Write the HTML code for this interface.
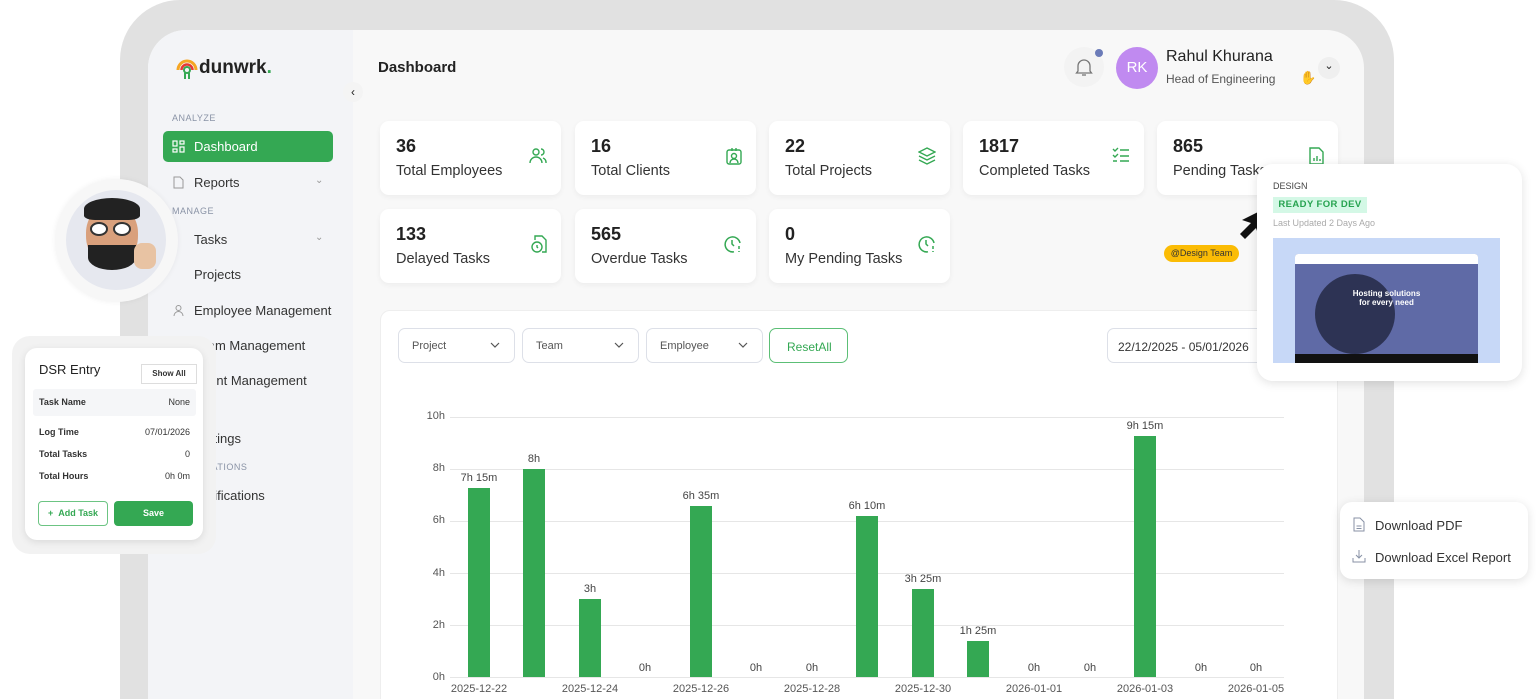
<!DOCTYPE html>
<html style="width:1536px;height:699px;overflow:hidden"><head><meta charset="utf-8"><style>
*{box-sizing:border-box;margin:0;padding:0}
body{width:1536px;height:699px;overflow:hidden;background:#fff;font-family:"Liberation Sans",sans-serif;color:#222;position:relative}
.abs{position:absolute}
.frame{left:120px;top:0;width:1274px;height:699px;background:#e1e1e1;border-radius:60px 60px 0 0}
.screen{left:148px;top:30px;width:1216px;height:669px;background:#f8f8f8;border-radius:38px 38px 0 0;overflow:hidden}
.side{left:148px;top:30px;width:205px;height:669px;background:#f3f4f7;border-radius:38px 0 0 0}
.card{background:#fff;border-radius:9px;box-shadow:0 2px 6px rgba(0,0,0,.05)}
.num{position:absolute;left:16px;top:15px;font-size:18px;font-weight:bold;color:#222}
.lab{position:absolute;left:16px;top:42px;font-size:14.5px;color:#333}
.ic{position:absolute;right:14px;top:26px}
.nav{position:absolute;left:194px;font-size:13px;color:#333}
.sec{position:absolute;left:172px;font-size:9px;color:#8a93a6;letter-spacing:.5px}
.sel{position:absolute;top:328px;height:35px;border:1px solid #dde0e8;border-radius:7px;background:#fff;font-size:11px;color:#555;padding:11px 0 0 13px}
.sel svg{position:absolute;right:14px;top:13px}
.yl{position:absolute;left:405px;width:40px;text-align:right;font-size:11px;color:#555}
.gl{position:absolute;left:450px;width:834px;height:1px;background:#e6e6e6}
.bar{position:absolute;width:22px;background:#34a853}
.bl{position:absolute;width:80px;text-align:center;font-size:11px;color:#444}
.xl{position:absolute;top:683px;width:80px;text-align:center;font-size:11px;color:#555}
</style></head><body>
<div class="abs frame"></div>
<div class="abs screen"></div>
<div class="abs side"></div>
<svg class="abs" style="left:175px;top:57px" width="24" height="24" viewBox="0 0 24 24"><path d="M3 13a9 9 0 0 1 18 0" stroke="#f5a623" stroke-width="3" fill="none"/><path d="M6.5 13a5.5 5.5 0 0 1 11 0" stroke="#e53935" stroke-width="2.5" fill="none"/><circle cx="12" cy="13" r="3" fill="none" stroke="#34a853" stroke-width="2"/><path d="M10 16v6M14 16v6" stroke="#34a853" stroke-width="2"/></svg>
<div class="abs" style="left:199px;top:57px;font-size:19px;font-weight:bold;color:#222">dunwrk<span style="color:#34a853">.</span></div>
<div class="abs" style="left:343px;top:82px;width:20px;height:20px;border-radius:50%;background:#f4f4f4;font-size:12px;text-align:center;line-height:20px;color:#222">&#8249;</div>
<div class="sec" style="top:113px">ANALYZE</div>
<div class="abs" style="left:163px;top:131px;width:170px;height:31px;background:#34a853;border-radius:5px"></div>
<svg class="abs" style="left:172px;top:140px" width="13" height="13" viewBox="0 0 13 13" fill="none" stroke="#fff" stroke-width="1.2"><rect x="1" y="1" width="4" height="5"/><rect x="8" y="1" width="4" height="3"/><rect x="1" y="9" width="4" height="3"/><rect x="8" y="7" width="4" height="5"/></svg>
<div class="nav" style="top:139px;color:#fff">Dashboard</div>
<svg class="abs" style="left:173px;top:176px" width="11" height="13" viewBox="0 0 11 13" fill="none" stroke="#999"><path d="M1 1h6l3 3v8H1z"/></svg>
<div class="nav" style="top:175px">Reports</div>
<div class="abs" style="left:315px;top:175px;font-size:10px;color:#999">&#8964;</div>
<div class="sec" style="top:206px">MANAGE</div>
<div class="nav" style="top:232px">Tasks</div>
<div class="abs" style="left:315px;top:232px;font-size:10px;color:#999">&#8964;</div>
<div class="nav" style="top:267px">Projects</div>
<div class="nav" style="top:303px">Employee Management</div>
<svg class="abs" style="left:173px;top:304px" width="11" height="13" viewBox="0 0 11 13" fill="none" stroke="#999"><circle cx="5.5" cy="4" r="2.5"/><path d="M1 12a4.5 4.5 0 0 1 9 0"/></svg>
<div class="nav" style="top:338px">Team Management</div>
<div class="nav" style="top:373px">Client Management</div>
<div class="nav" style="top:431px">Settings</div>
<div class="sec" style="top:462px">NOTIFICATIONS</div>
<div class="nav" style="top:488px">Notifications</div>
<div class="abs" style="left:378px;top:59px;font-size:15px;font-weight:bold">Dashboard</div>
<div class="abs" style="left:1064px;top:47px;width:40px;height:40px;border-radius:50%;background:#f3f3f3"></div>
<svg class="abs" style="left:1075px;top:57px" width="18" height="20" viewBox="0 0 18 20" fill="none" stroke="#777" stroke-width="1.3"><path d="M3 14V9a6 6 0 0 1 12 0v5l1.5 2h-15z"/><path d="M7 18h4"/></svg>
<div class="abs" style="left:1095px;top:49px;width:8px;height:8px;border-radius:50%;background:#6b7bb8"></div>
<div class="abs" style="left:1116px;top:47px;width:42px;height:42px;border-radius:50%;background:#c08af0;color:#fff;font-size:15px;text-align:center;line-height:42px">RK</div>
<div class="abs" style="left:1166px;top:48px;font-size:16px;color:#222">Rahul Khurana</div>
<div class="abs" style="left:1166px;top:72px;font-size:12px;color:#555">Head of Engineering</div>
<div class="abs" style="left:1300px;top:70px;font-size:13px;color:#ddd">&#9995;</div>
<div class="abs" style="left:1318px;top:57px;width:22px;height:22px;border-radius:50%;background:#efefef;text-align:center;font-size:11px;line-height:18px">&#8964;</div>
<div class="abs card" style="left:380px;top:121px;width:181px;height:74px"><div class="num">36</div><div class="lab">Total Employees</div><svg class="ic" width="18" height="18" viewBox="0 0 18 18" fill="none" stroke="#34a853" stroke-width="1.4"><circle cx="7" cy="5" r="3"/><path d="M1 16a6 6 0 0 1 12 0M12 2a3 3 0 0 1 0 6M14 11a5 5 0 0 1 3 5"/></svg></div>
<div class="abs card" style="left:575px;top:121px;width:181px;height:74px"><div class="num">16</div><div class="lab">Total Clients</div><svg class="ic" width="16" height="18" viewBox="0 0 16 18" fill="none" stroke="#34a853" stroke-width="1.4"><rect x="1" y="3" width="14" height="14" rx="2"/><circle cx="8" cy="9" r="2.5"/><path d="M4 16a4 4 0 0 1 8 0M6 1v3M10 1v3"/></svg></div>
<div class="abs card" style="left:769px;top:121px;width:181px;height:74px"><div class="num">22</div><div class="lab">Total Projects</div><svg class="ic" width="18" height="18" viewBox="0 0 18 18" fill="none" stroke="#34a853" stroke-width="1.4"><path d="M9 1l8 4-8 4-8-4z"/><path d="M1 9l8 4 8-4M1 13l8 4 8-4"/></svg></div>
<div class="abs card" style="left:963px;top:121px;width:181px;height:74px"><div class="num">1817</div><div class="lab">Completed Tasks</div><svg class="ic" width="18" height="16" viewBox="0 0 18 16" fill="none" stroke="#34a853" stroke-width="1.4"><path d="M1 2l2 2 3-3M1 8l2 2 3-3M1 14h4M8 3h9M8 9h9M8 14h9"/></svg></div>
<div class="abs card" style="left:1157px;top:121px;width:181px;height:74px"><div class="num">865</div><div class="lab">Pending Tasks</div><svg class="ic" width="15" height="18" viewBox="0 0 15 18" fill="none" stroke="#34a853" stroke-width="1.4"><path d="M1 1h9l4 4v12H1z"/><path d="M5 14v-3M8 14v-5M11 14v-2"/></svg></div>
<div class="abs card" style="left:380px;top:209px;width:181px;height:74px"><div class="num">133</div><div class="lab">Delayed Tasks</div><svg class="ic" width="16" height="18" viewBox="0 0 16 18" fill="none" stroke="#34a853" stroke-width="1.4"><path d="M4 5V1h7l4 4v12h-4"/><circle cx="6" cy="12" r="5"/><path d="M6 10v2l1 1"/></svg></div>
<div class="abs card" style="left:575px;top:209px;width:181px;height:74px"><div class="num">565</div><div class="lab">Overdue Tasks</div><svg class="ic" width="18" height="18" viewBox="0 0 18 18" fill="none" stroke="#34a853" stroke-width="1.5"><path d="M16 8a7.5 7.5 0 1 0-6 8.8"/><path d="M8 5v4l2 2M15 11v3M15 16v1"/></svg></div>
<div class="abs card" style="left:769px;top:209px;width:181px;height:74px"><div class="num">0</div><div class="lab">My Pending Tasks</div><svg class="ic" width="18" height="18" viewBox="0 0 18 18" fill="none" stroke="#34a853" stroke-width="1.5"><path d="M16 8a7.5 7.5 0 1 0-6 8.8"/><path d="M8 5v4l2 2M15 11v3M15 16v1"/></svg></div>
<div class="abs" style="left:380px;top:310px;width:958px;height:400px;background:#fff;border:1px solid #eee;border-radius:10px"></div>
<div class="sel" style="left:398px;width:117px">Project<svg width="10" height="6" viewBox="0 0 10 6" fill="none" stroke="#555" stroke-width="1.2"><path d="M1 1l4 4 4-4"/></svg></div>
<div class="sel" style="left:522px;width:117px">Team<svg width="10" height="6" viewBox="0 0 10 6" fill="none" stroke="#555" stroke-width="1.2"><path d="M1 1l4 4 4-4"/></svg></div>
<div class="sel" style="left:646px;width:117px">Employee<svg width="10" height="6" viewBox="0 0 10 6" fill="none" stroke="#555" stroke-width="1.2"><path d="M1 1l4 4 4-4"/></svg></div>
<div class="sel" style="left:769px;width:79px;border-color:#5cbf76;color:#34a853;font-size:12px;padding-left:17px">ResetAll</div>
<div class="sel" style="left:1107px;width:160px;font-size:12px;color:#333;padding-left:10px">22/12/2025 - 05/01/2026</div>
<div class="yl" style="top:410px">10h</div><div class="gl" style="top:417px"></div>
<div class="yl" style="top:462px">8h</div><div class="gl" style="top:469px"></div>
<div class="yl" style="top:514px">6h</div><div class="gl" style="top:521px"></div>
<div class="yl" style="top:567px">4h</div><div class="gl" style="top:573px"></div>
<div class="yl" style="top:619px">2h</div><div class="gl" style="top:625px"></div>
<div class="yl" style="top:671px">0h</div><div class="gl" style="top:677px"></div>
<div class="bar" style="left:468px;top:488px;height:189px"></div><div class="bl" style="left:439px;top:472px">7h 15m</div>
<div class="bar" style="left:523px;top:469px;height:208px"></div><div class="bl" style="left:494px;top:453px">8h</div>
<div class="bar" style="left:579px;top:599px;height:78px"></div><div class="bl" style="left:550px;top:583px">3h</div>
<div class="bl" style="left:605px;top:662px">0h</div>
<div class="bar" style="left:690px;top:506px;height:171px"></div><div class="bl" style="left:661px;top:490px">6h 35m</div>
<div class="bl" style="left:716px;top:662px">0h</div>
<div class="bl" style="left:772px;top:662px">0h</div>
<div class="bar" style="left:856px;top:516px;height:161px"></div><div class="bl" style="left:827px;top:500px">6h 10m</div>
<div class="bar" style="left:912px;top:589px;height:88px"></div><div class="bl" style="left:883px;top:573px">3h 25m</div>
<div class="bar" style="left:967px;top:641px;height:36px"></div><div class="bl" style="left:938px;top:625px">1h 25m</div>
<div class="bl" style="left:994px;top:662px">0h</div>
<div class="bl" style="left:1050px;top:662px">0h</div>
<div class="bar" style="left:1134px;top:436px;height:241px"></div><div class="bl" style="left:1105px;top:420px">9h 15m</div>
<div class="bl" style="left:1161px;top:662px">0h</div>
<div class="bl" style="left:1216px;top:662px">0h</div>
<div class="xl" style="left:439px">2025-12-22</div><div class="xl" style="left:550px">2025-12-24</div><div class="xl" style="left:661px">2025-12-26</div><div class="xl" style="left:772px">2025-12-28</div><div class="xl" style="left:883px">2025-12-30</div><div class="xl" style="left:994px">2026-01-01</div><div class="xl" style="left:1105px">2026-01-03</div><div class="xl" style="left:1216px">2026-01-05</div>
<div class="abs" style="left:55px;top:179px;width:123px;height:123px;border-radius:50%;background:#f7f7f7;box-shadow:0 0 6px rgba(0,0,0,.06)"></div>
<div class="abs" style="left:66px;top:190px;width:100px;height:100px;border-radius:50%;background:#e6e8ef"></div>
<div class="abs" style="left:86px;top:205px;width:52px;height:62px;border-radius:45% 45% 50% 50%;background:#d9a07c"></div>
<div class="abs" style="left:84px;top:198px;width:56px;height:22px;border-radius:50% 50% 20% 20%;background:#222"></div>
<div class="abs" style="left:88px;top:245px;width:48px;height:25px;border-radius:0 0 50% 50%;background:#222"></div>
<div class="abs" style="left:90px;top:222px;width:18px;height:14px;border:2px solid #333;border-radius:50%;background:#fff"></div>
<div class="abs" style="left:113px;top:222px;width:18px;height:14px;border:2px solid #333;border-radius:50%;background:#fff"></div>
<div class="abs" style="left:134px;top:243px;width:22px;height:26px;border-radius:8px;background:#e8c3a3"></div>
<div class="abs" style="left:12px;top:336px;width:204px;height:218px;border-radius:18px;background:#f2f2f2"></div>
<div class="abs" style="left:25px;top:348px;width:178px;height:192px;border-radius:12px;background:#fff;box-shadow:0 2px 8px rgba(0,0,0,.1)"></div>
<div class="abs" style="left:39px;top:362px;font-size:13px;color:#222">DSR Entry</div>
<div class="abs" style="left:141px;top:364px;width:56px;height:20px;border:1px solid #ddd;font-size:8px;font-weight:bold;text-align:center;line-height:18px;color:#333">Show All</div>
<div class="abs" style="left:33px;top:389px;width:163px;height:27px;background:#f5f6f8;border-radius:3px"></div>
<div class="abs" style="left:39px;top:397px;font-size:9px;font-weight:bold;color:#333">Task Name</div><div class="abs" style="left:150px;top:397px;width:40px;text-align:right;font-size:9px;color:#333">None</div>
<div class="abs" style="left:39px;top:427px;font-size:9px;font-weight:bold;color:#333">Log Time</div><div class="abs" style="left:130px;top:427px;width:60px;text-align:right;font-size:9px;color:#333">07/01/2026</div>
<div class="abs" style="left:39px;top:449px;font-size:9px;font-weight:bold;color:#333">Total Tasks</div><div class="abs" style="left:150px;top:449px;width:40px;text-align:right;font-size:9px;color:#333">0</div>
<div class="abs" style="left:39px;top:471px;font-size:9px;font-weight:bold;color:#333">Total Hours</div><div class="abs" style="left:150px;top:471px;width:40px;text-align:right;font-size:9px;color:#333">0h 0m</div>
<div class="abs" style="left:38px;top:501px;width:70px;height:25px;border:1px solid #6cc483;border-radius:4px;font-size:9px;font-weight:bold;color:#34a853;text-align:center;line-height:23px">+ &nbsp;Add Task</div>
<div class="abs" style="left:114px;top:501px;width:79px;height:25px;background:#34a853;border-radius:4px;font-size:9px;font-weight:bold;color:#fff;text-align:center;line-height:25px">Save</div>
<div class="abs" style="left:1164px;top:245px;width:75px;height:17px;background:#fbbc05;border-radius:9px;font-size:9px;color:#333;text-align:center;line-height:17px">@Design Team</div>
<svg class="abs" style="left:1238px;top:206px" width="30" height="36" viewBox="0 0 30 36"><path d="M28 2L4 14l9 3-11 11 5 5 11-11 3 9z" fill="#111"/></svg>
<div class="abs" style="left:1257px;top:164px;width:265px;height:217px;background:#fff;border-radius:16px;box-shadow:0 2px 10px rgba(0,0,0,.12)"></div>
<div class="abs" style="left:1273px;top:181px;font-size:9px;color:#444">DESIGN</div>
<div class="abs" style="left:1273px;top:197px;width:94px;height:16px;background:#d4f8e6;font-size:9.5px;font-weight:bold;color:#27a350;text-align:center;line-height:16px;letter-spacing:.4px">READY FOR DEV</div>
<div class="abs" style="left:1273px;top:218px;font-size:9px;color:#aaa">Last Updated 2 Days Ago</div>
<div class="abs" style="left:1273px;top:238px;width:227px;height:125px;background:#c7d8f7"></div>
<div class="abs" style="left:1295px;top:254px;width:183px;height:109px;background:#5f6aa6;border-radius:3px 3px 0 0;overflow:hidden"><div style="height:10px;background:#fff"></div><div style="position:absolute;left:20px;top:20px;width:80px;height:80px;border-radius:50%;background:#2d3354"></div><div style="position:absolute;left:0;right:0;top:35px;text-align:center;color:#fff;font-size:8px;font-weight:bold;line-height:9px">Hosting solutions<br>for every need</div><div style="position:absolute;left:0;right:0;bottom:0;height:9px;background:#111"></div></div>
<div class="abs" style="left:1340px;top:502px;width:188px;height:77px;background:#fff;border-radius:12px;box-shadow:0 2px 10px rgba(0,0,0,.12)"></div>
<svg class="abs" style="left:1353px;top:517px" width="12" height="15" viewBox="0 0 12 15" fill="none" stroke="#8892a6"><path d="M1 1h6l4 4v9H1z"/><path d="M3.5 9h5M3.5 11.5h5"/></svg>
<div class="abs" style="left:1375px;top:518px;font-size:13px;color:#333">Download PDF</div>
<svg class="abs" style="left:1352px;top:549px" width="14" height="14" viewBox="0 0 14 14" fill="none" stroke="#8892a6"><path d="M7 1v8M4 6l3 3 3-3M1 9v4h12V9"/></svg>
<div class="abs" style="left:1375px;top:550px;font-size:13px;color:#333">Download Excel Report</div>
</body></html>
